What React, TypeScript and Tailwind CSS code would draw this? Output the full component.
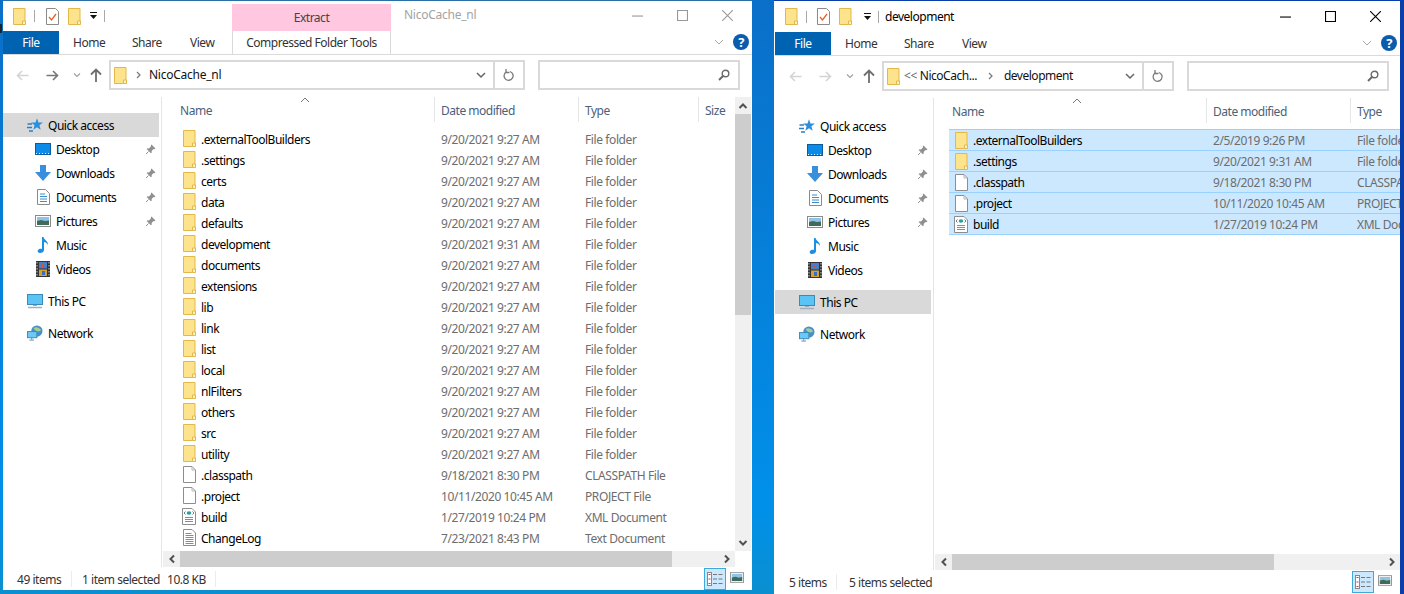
import React from "react";

const Folder = ({ className = "" }: { className?: string }) => (
  <svg width="13" height="17" viewBox="0 0 13 17" className={`shrink-0 ${className}`}>
    <path d="M.5.5h11.500v16H.5z" fill="#fde38c" stroke="#e2b84a" />
    <path d="M9.500 16.500v-3.500h3v3.500z" fill="#fff3c4" stroke="#e2b84a" />
  </svg>
);
const FileIcon = () => (
  <svg width="13" height="17" viewBox="0 0 13 17" className="shrink-0">
    <path d="M.5.5h8.500l3.500 3.500v12.500H.5z" fill="#fff" stroke="#8d8d8d" />
    <path d="M9 .5V4h3.500" fill="none" stroke="#b5b5b5" />
  </svg>
);
const XmlIcon = () => (
  <svg width="14" height="17" viewBox="0 0 14 17" className="shrink-0 -ml-[1px]">
    <path d="M.5.5h9.500l3.500 3.500v12.500H.5z" fill="#fff" stroke="#8d8d8d" />
    <ellipse cx="7" cy="5" rx="2.300" ry="1.800" fill="#2a9d9d" />
    <path d="M3.500 3.500 2 5l1.500 1.500M10.500 3.500 12 5l-1.500 1.500" fill="none" stroke="#6a7a90" />
    <path d="M3 9.500h8M3 11.500h8M3 13.500h8" stroke="#8a8a8a" />
  </svg>
);
const TextIcon = () => (
  <svg width="13" height="17" viewBox="0 0 13 17" className="shrink-0">
    <path d="M.5.5h8.500l3.500 3.500v12.500H.5z" fill="#fff" stroke="#8d8d8d" />
    <path d="M2.500 4.500h6M2.500 6.500h8M2.500 8.500h8M2.500 10.500h8M2.500 12.500h8M2.500 14.500h8" stroke="#8a8a8a" />
  </svg>
);
const Checklist = () => (
  <svg width="13" height="17" viewBox="0 0 13 17" className="shrink-0">
    <path d="M.5.5h9l3 3v13H.5z" fill="#fff" stroke="#8a8a8a" />
    <path d="M3 9l2.500 3L10 6" fill="none" stroke="#e8622a" strokeWidth="1.300" />
  </svg>
);
const Dropdown = () => (
  <svg width="9" height="8" viewBox="0 0 9 8" className="shrink-0">
    <path d="M1 .5h7" stroke="#111" />
    <path d="M1 3h7L4.500 7z" fill="#111" />
  </svg>
);
const Pin = () => (
  <svg width="11" height="11" viewBox="0 0 11 11" className="shrink-0">
    <path d="M6.500.5l4 4-1.200.7-.8-.2L6.600 7l.2 1.600-.9.7L1.700 5l.8-.8 1.500.2L6 2.300 5.800 1.400z" fill="#8f8f8f" />
    <path d="M3.500 7.500 1 10" stroke="#8f8f8f" />
  </svg>
);
const Star = () => (
  <svg width="16" height="15" viewBox="0 0 16 15" className="shrink-0">
    <path d="M10 .2l1.500 4.300 4.400.1-3.500 2.700 1.300 4.500L10 9.200l-3.700 2.600 1.300-4.500-3.500-2.700 4.400-.1z" fill="#2a8fdc" />
    <path d="M.5 6h4.500M0 9.500h5M2 13h4" stroke="#2a7fc4" strokeWidth="1.500" />
  </svg>
);
const Desktop = () => (
  <svg width="16" height="12" viewBox="0 0 16 12">
    <rect x=".5" y=".5" width="15" height="11" fill="#0d8be8" stroke="#0f5c9c" />
    <path d="M1 10.500h14" stroke="#dff" strokeDasharray="1 2" />
  </svg>
);
const Down = () => (
  <svg width="16" height="16" viewBox="0 0 16 16">
    <path d="M5 0h6v7h5l-8 9-8-9h5z" fill="#3a8fdc" />
  </svg>
);
const Docs = () => (
  <svg width="13" height="16" viewBox="0 0 13 16">
    <path d="M.5.5h8l4 4v11H.5z" fill="#fff" stroke="#8a8a8a" />
    <path d="M3 5h5M3 7.500h7M3 10h7M3 12.500h7" stroke="#3a8fc8" />
  </svg>
);
const Pics = ({ w = 16, h = 12 }: { w?: number; h?: number }) => (
  <svg width={w} height={h} viewBox="0 0 16 12" className="shrink-0">
    <rect x=".5" y=".5" width="15" height="11" fill="#fff" stroke="#8a8a8a" />
    <rect x="2" y="2" width="12" height="4" fill="#8fc4e8" />
    <path d="M2 6l4-1 4 1 4-.5V10H2z" fill="#3f6b5a" />
  </svg>
);
const Music = () => (
  <svg width="12" height="16" viewBox="0 0 12 16">
    <path d="M5 0h1.500c.5 3 5 4 4.500 8-.7-2-3-3-4-3v8c0 2-2 3-4 3S0 14.500 1 13s3-1.500 4-1z" fill="#1c8fe0" />
  </svg>
);
const Film = () => (
  <svg width="14" height="16" viewBox="0 0 14 16">
    <rect width="14" height="16" fill="#333" />
    <path d="M1 1v14M13 1v14" stroke="#ccc" strokeDasharray="1.500 1.500" />
    <rect x="3" y="1" width="8" height="6.500" fill="#4a7fc8" />
    <rect x="3" y="8.500" width="8" height="6.500" fill="#d8a030" />
    <rect x="5" y="3" width="3" height="3" fill="#e05030" />
    <rect x="6" y="10" width="3" height="4" fill="#3a70c0" />
  </svg>
);
const Pc = () => (
  <svg width="16" height="15" viewBox="0 0 16 15">
    <rect x=".5" y=".5" width="15" height="10" fill="#5cc4f5" stroke="#3a8ab8" />
    <path d="M6 11h4v1H6z" fill="#9ab" />
    <path d="M1 13.500h14" stroke="#a0b0c0" strokeWidth="1.500" />
  </svg>
);
const Net = () => (
  <svg width="17" height="16" viewBox="0 0 17 16">
    <circle cx="10.500" cy="6" r="6" fill="#4a8fc8" />
    <path d="M7 3c2-2 6-1 8 2-3 2-5 2-8-2z" fill="#9fd08f" />
    <rect x=".5" y="6.500" width="10" height="6.500" fill="#6acaf5" stroke="#3a8ab8" />
    <path d="M5 13v2M2.500 15.500h5" stroke="#5a8ab0" />
  </svg>
);
const Chev = ({ d, c = "#555", w = 1.5 }: { d: string; c?: string; w?: number }) => (
  <svg width="10" height="10" viewBox="0 0 10 10" className="shrink-0">
    <path d={d} fill="none" stroke={c} strokeWidth={w} />
  </svg>
);
const Help = () => (
  <div className="w-[16px] h-[16px] rounded-full bg-[#0b5cad] text-white flex items-center justify-center text-[13px] font-bold leading-none shrink-0">?</div>
);
const Arrow = ({ c, flip = false }: { c: string; flip?: boolean }) => (
  <svg width="13" height="11" viewBox="0 0 13 11" className={`shrink-0 ${flip ? "rotate-180" : ""}`}>
    <path d="M12.500 5.500H1.500M6 1 1.500 5.500 6 10" fill="none" stroke={c} strokeWidth="1.600" />
  </svg>
);
const UpArrow = () => (
  <svg width="12" height="14" viewBox="0 0 12 14" className="shrink-0">
    <path d="M6 14V2M1 6.500 6 1.500l5 5" fill="none" stroke="#6e6e6e" strokeWidth="1.800" />
  </svg>
);
const Refresh = () => (
  <svg width="12" height="13" viewBox="0 0 12 13">
    <path d="M7 2.500a4.500 4.500 0 1 1-3.500.3" fill="none" stroke="#7a7a7a" strokeWidth="1.300" />
    <path d="M3 0v3.500h3.500" fill="none" stroke="#7a7a7a" strokeWidth="1.300" />
  </svg>
);
const Search = () => (
  <svg width="12" height="12" viewBox="0 0 12 12">
    <circle cx="7.500" cy="4.500" r="3.300" fill="none" stroke="#6a6a6a" strokeWidth="1.400" />
    <path d="M5 7 1 11" stroke="#6a6a6a" strokeWidth="2" />
  </svg>
);
const Details = () => (
  <svg width="16" height="14" viewBox="0 0 16 14">
    <rect x=".5" y=".5" width="4" height="13" fill="#fff" stroke="#888" />
    <path d="M1.500 2.500h2M1.500 7h2M1.500 11.500h2" stroke="#c04040" />
    <path d="M6 2.500h4M11.500 2.500h4M6 7h4M11.500 7h4M6 11.500h4M11.500 11.500h4" stroke="#777" />
  </svg>
);

type Row = { n: string; d: string; t: string; i: "f" | "p" | "x" | "t" };
const ft = "File folder";
const leftRows: Row[] = [
  [".externalToolBuilders", "9/20/2021 9:27 AM"], [".settings", "9/20/2021 9:27 AM"], ["certs", "9/20/2021 9:27 AM"],
  ["data", "9/20/2021 9:27 AM"], ["defaults", "9/20/2021 9:27 AM"], ["development", "9/20/2021 9:31 AM"],
  ["documents", "9/20/2021 9:27 AM"], ["extensions", "9/20/2021 9:27 AM"], ["lib", "9/20/2021 9:27 AM"],
  ["link", "9/20/2021 9:27 AM"], ["list", "9/20/2021 9:27 AM"], ["local", "9/20/2021 9:27 AM"],
  ["nlFilters", "9/20/2021 9:27 AM"], ["others", "9/20/2021 9:27 AM"], ["src", "9/20/2021 9:27 AM"],
  ["utility", "9/20/2021 9:27 AM"],
].map(([n, d]) => ({ n, d, t: ft, i: "f" as const }));
leftRows.push(
  { n: ".classpath", d: "9/18/2021 8:30 PM", t: "CLASSPATH File", i: "p" },
  { n: ".project", d: "10/11/2020 10:45 AM", t: "PROJECT File", i: "p" },
  { n: "build", d: "1/27/2019 10:24 PM", t: "XML Document", i: "x" },
  { n: "ChangeLog", d: "7/23/2021 8:43 PM", t: "Text Document", i: "t" }
);
const rightRows: Row[] = [
  { n: ".externalToolBuilders", d: "2/5/2019 9:26 PM", t: ft, i: "f" },
  { n: ".settings", d: "9/20/2021 9:31 AM", t: ft, i: "f" },
  { n: ".classpath", d: "9/18/2021 8:30 PM", t: "CLASSPATH File", i: "p" },
  { n: ".project", d: "10/11/2020 10:45 AM", t: "PROJECT File", i: "p" },
  { n: "build", d: "1/27/2019 10:24 PM", t: "XML Document", i: "x" },
];
const RowIcon = ({ i }: { i: Row["i"] }) =>
  i === "f" ? <Folder /> : i === "p" ? <FileIcon /> : i === "x" ? <XmlIcon /> : <TextIcon />;

const Side = ({ icon, label, pin, active, sub }: { icon: React.ReactNode; label: string; pin?: boolean; active?: boolean; sub?: boolean }) => (
  <div className={`h-[24px] w-[156px] flex items-center shrink-0 ${active ? "bg-[#d9d9d9]" : ""}`}>
    <div className={`flex items-center justify-center w-[16px] shrink-0 ${sub ? "ml-[32px] mr-[5px]" : "ml-[24px] mr-[5px]"}`}>{icon}</div>
    <span className="text-black pt-[2px]">{label}</span>
    {pin && <span className="ml-auto mr-[3px]"><Pin /></span>}
  </div>
);

function Win({ active, title, rows, selected, crumbs, wClass, titleH, status, scroll, extract }: any) {
  return (
    <div className={`flex flex-col bg-white overflow-hidden shrink-0 ${wClass}`}>
      <div className={`flex shrink-0 ${titleH}`}>
        {extract ? (
          <>
            <div className="w-[229px] flex items-center pl-[10px] shrink-0">
              <Folder /><div className="ml-[8px] w-px h-[12px] bg-[#a8a8a8]" />
              <div className="ml-[11px]"><Checklist /></div>
              <div className="ml-[9px]"><Folder /></div>
              <div className="ml-[8px]"><Dropdown /></div>
              <div className="ml-[6px] w-px h-[12px] bg-[#a8a8a8]" />
            </div>
            <div className="w-[159px] mt-[3px] bg-[#ffc7e0] flex items-center justify-center text-[#444] shrink-0 pt-[1px]">Extract</div>
            <div className="ml-[13px] flex items-center text-[#a3a3a3] tracking-[-0.25px] -mt-[3px]">{title}</div>
          </>
        ) : (
          <div className="flex items-center pl-[10px]">
            <Folder /><div className="ml-[8px] w-px h-[12px] bg-[#a8a8a8]" />
            <div className="ml-[10px]"><Checklist /></div>
            <div className="ml-[9px]"><Folder /></div>
            <div className="ml-[11px]"><Dropdown /></div>
            <div className="ml-[6px] w-px h-[12px] bg-[#a8a8a8]" />
            <div className="ml-[6px] text-black">{title}</div>
          </div>
        )}
        <div className="ml-auto flex shrink-0 -mt-[1px] mr-[2px]">
          {["M0 5.500h10", "M.5.500h9v9h-9z", "M0 0l10 10M10 0 0 10"].map((d, i) => (
            <div key={i} className="w-[45px] flex items-center justify-center">
              <svg width="11" height="11" viewBox="0 0 10 10"><path d={d} fill="none" stroke={active ? "#000" : "#999"} /></svg>
            </div>
          ))}
        </div>
      </div>
      <div className="h-[23px] flex items-stretch shrink-0 text-[#333]">
        <div className="w-[56px] bg-[#0063b1] text-white flex items-center justify-center shrink-0">File</div>
        <span className="ml-[14px] self-center w-[59px]">Home</span>
        <span className="self-center w-[58px]">Share</span>
        <span className="self-center w-[42px]">View</span>
        {extract && <div className="w-[159px] border-x border-[#d9d9d9] flex items-center justify-center">Compressed Folder Tools</div>}
        <div className="ml-auto flex items-center shrink-0 mr-[3px] pb-[1px]">
          <Chev d="M1 3l4 4 4-4" c="#a8a8a8" w={1} />
          <div className="ml-[9px]"><Help /></div>
        </div>
      </div>
      <div className="h-px bg-[#dadada] shrink-0" />
      <div className="h-[42px] shrink-0 flex items-start pt-[5px]">
        <div className={`flex items-center h-[30px] shrink-0 ${active ? "w-[107px] pl-[14px]" : "w-[106px] pl-[13px]"}`}>
          <Arrow c="#d4d4d4" />
          <div className="ml-[17px]"><Arrow c={active ? "#d4d4d4" : "#777"} flip /></div>
          <div className="ml-[13px]"><Chev d="M2 3.500l3 3 3-3" c="#a0a0a0" w={1.200} /></div>
          <div className="ml-[8px]"><UpArrow /></div>
        </div>
        <div className={`h-[30px] border-2 border-[#d9d9d9] flex items-center pl-[3px] shrink-0 text-[#111] ${active ? "w-[292px]" : "w-[416px]"}`}>
          <Folder />
          {crumbs}
          <div className="ml-auto flex items-center h-full">
            <Chev d="M1 3l4 4 4-4" c="#666" w={1.500} />
            <div className="ml-[7px] h-full border-l-2 border-[#d9d9d9] w-[30px] flex items-center justify-center"><Refresh /></div>
          </div>
        </div>
        <div className="ml-[13px] w-[202px] h-[30px] border-2 border-[#d9d9d9] flex items-center justify-end pr-[8px] shrink-0"><Search /></div>
      </div>
      <div className="flex-1 flex min-h-0">
        <div className="w-[159px] border-r border-[#e5e5e5] flex flex-col pt-[16px] shrink-0 overflow-hidden">
          <Side icon={<Star />} label="Quick access" active={!active} />
          <Side sub icon={<Desktop />} label="Desktop" pin />
          <Side sub icon={<Down />} label="Downloads" pin />
          <Side sub icon={<Docs />} label="Documents" pin />
          <Side sub icon={<Pics />} label="Pictures" pin />
          <Side sub icon={<Music />} label="Music" />
          <Side sub icon={<Film />} label="Videos" />
          <div className="mt-[8px]"><Side icon={<Pc />} label="This PC" active={active} /></div>
          <div className="mt-[8px]"><Side icon={<Net />} label="Network" /></div>
        </div>
        <div className="flex-1 min-w-0 flex flex-col">
          <div className="flex-1 flex min-h-0">
            <div className="flex-1 min-w-0 pl-[15px] overflow-hidden">
              <div className="relative flex h-[25px] text-[#4c607a] mb-[6px]">
                <svg width="10" height="6" viewBox="0 0 10 6" className="absolute left-[123px] top-0"><path d="M1 5l4-4 4 4" fill="none" stroke="#777" /></svg>
                <div className="w-[258px] border-r border-[#e5e5e5] pl-[3px] pt-[2px] flex items-center shrink-0">Name</div>
                <div className="w-[144px] border-r border-[#e5e5e5] pl-[6px] pt-[2px] flex items-center shrink-0">Date modified</div>
                <div className="w-[120px] border-r border-[#e5e5e5] pl-[6px] pt-[2px] flex items-center shrink-0">Type</div>
                {scroll && <div className="pl-[6px] pt-[2px] flex items-center shrink-0">Size</div>}
              </div>
              {rows.map((r: Row, k: number) => (
                <div key={r.n} className={`flex items-center box-border ${selected ? `bg-[#cce8ff] border-b border-[#99d1ff] ${k === 0 ? "border-t h-[22px]" : "h-[21px]"}` : "h-[21px]"}`}>
                  <div className="w-[264px] flex items-center pl-[6px] shrink-0 text-black">
                    <RowIcon i={r.i} />
                    <span className="ml-[5px] pt-[2px]">{r.n}</span>
                  </div>
                  <div className="w-[144px] text-[#6d6d6d] shrink-0 whitespace-nowrap pt-[2px] tracking-[-0.4px]">{r.d}</div>
                  <div className="text-[#6d6d6d] shrink-0 whitespace-nowrap pt-[2px] tracking-[-0.4px]">{r.t}</div>
                </div>
              ))}
            </div>
            {scroll && (
              <div className="w-[16px] mr-[1px] bg-[#f0f0f0] flex flex-col items-center shrink-0">
                <div className="h-[17px] flex items-center justify-center"><Chev d="M1.500 7l3.500-3.500L8.500 7" c="#505050" w={2} /></div>
                <div className="h-[201px] w-full bg-[#cdcdcd]" />
                <div className="flex-1" />
                <div className="h-[17px] flex items-center justify-center"><Chev d="M1.500 3l3.500 3.500L8.500 3" c="#505050" w={2} /></div>
              </div>
            )}
          </div>
          <div className={`h-[16px] ml-[1px] flex items-stretch bg-[#f0f0f0] shrink-0 ${scroll ? "mr-[17px]" : ""}`}>
            <div className="w-[17px] flex items-center justify-center shrink-0"><Chev d="M7 1.500 3.500 5 7 8.500" c="#505050" w={2} /></div>
            <div className={`bg-[#cdcdcd] shrink-0 ${scroll ? "w-[492px]" : "w-[322px]"}`} />
            <div className="ml-auto w-[17px] flex items-center justify-center"><Chev d="M3 1.500 6.500 5 3 8.500" c="#505050" w={2} /></div>
          </div>
        </div>
      </div>
      <div className={`flex items-center shrink-0 text-[#333] ${active ? "h-[24px]" : "h-[23px]"}`}>
        {status}
        <div className="ml-auto flex items-center mr-[8px]">
          <div className="w-[22px] h-[22px] bg-[#cce8ff] border border-[#3fa9dc] flex items-center justify-center"><Details /></div>
          <div className="ml-[4px] mb-[3px]"><Pics w={14} h={11} /></div>
        </div>
      </div>
    </div>
  );
}

export default function App() {
  return (
    <div className="relative w-[1404px] h-[594px] overflow-hidden flex items-start pl-[3px] text-[12px] leading-none tracking-[-0.48px] font-['Open_Sans','Liberation_Sans',sans-serif] bg-gradient-to-b from-[#0a6fc8] via-[#0090ea] via-85% to-[#0b8fd0]">
      <div className="absolute left-0 top-[24px] w-[2px] h-[9px] bg-[#222]" />
      <Win
        wClass="w-[749px] h-[590px] border-t border-[#2a70a8]"
        titleH="h-[30px]"
        title="NicoCache_nl"
        rows={leftRows}
        extract
        scroll
        crumbs={<>
          <span className="ml-[7px]"><Chev d="M3 2l3 3-3 3" c="#777" w={1.200} /></span>
          <span className="ml-[5px] tracking-[-0.25px]">NicoCache_nl</span>
        </>}
        status={<>
          <span className="ml-[14px] w-[54px] pt-[2px]">49 items</span>
          <div className="w-px h-[16px] bg-[#ececec]" />
          <span className="ml-[10px] w-[85px] pt-[2px]">1 item selected</span>
          <span className="w-[48px] pt-[2px]">10.8 KB</span>
          <div className="w-px h-[16px] bg-[#ececec]" />
        </>}
      />
      <div className="ml-[22px] w-[630px] h-[594px] border-t border-r-[4px] border-[#0a3ea8] pl-[1px] bg-white shrink-0 flex">
        <Win
          active
          wClass="w-[625px] h-[593px]"
          titleH="h-[31px]"
          title="development"
          rows={rightRows}
          selected
          crumbs={<>
            <span className="ml-[4px] text-[#666]">&lt;&lt;</span>
            <span className="ml-[3px]">NicoCach...</span>
            <span className="ml-[9px]"><Chev d="M3 2l3 3-3 3" c="#777" w={1.200} /></span>
            <span className="ml-[8px]">development</span>
          </>}
          status={<>
            <span className="ml-[14px] w-[47px] pt-[2px]">5 items</span>
            <div className="w-px h-[16px] bg-[#ececec]" />
            <span className="ml-[12px] pt-[2px]">5 items selected</span>
          </>}
        />
      </div>
    </div>
  );
}
